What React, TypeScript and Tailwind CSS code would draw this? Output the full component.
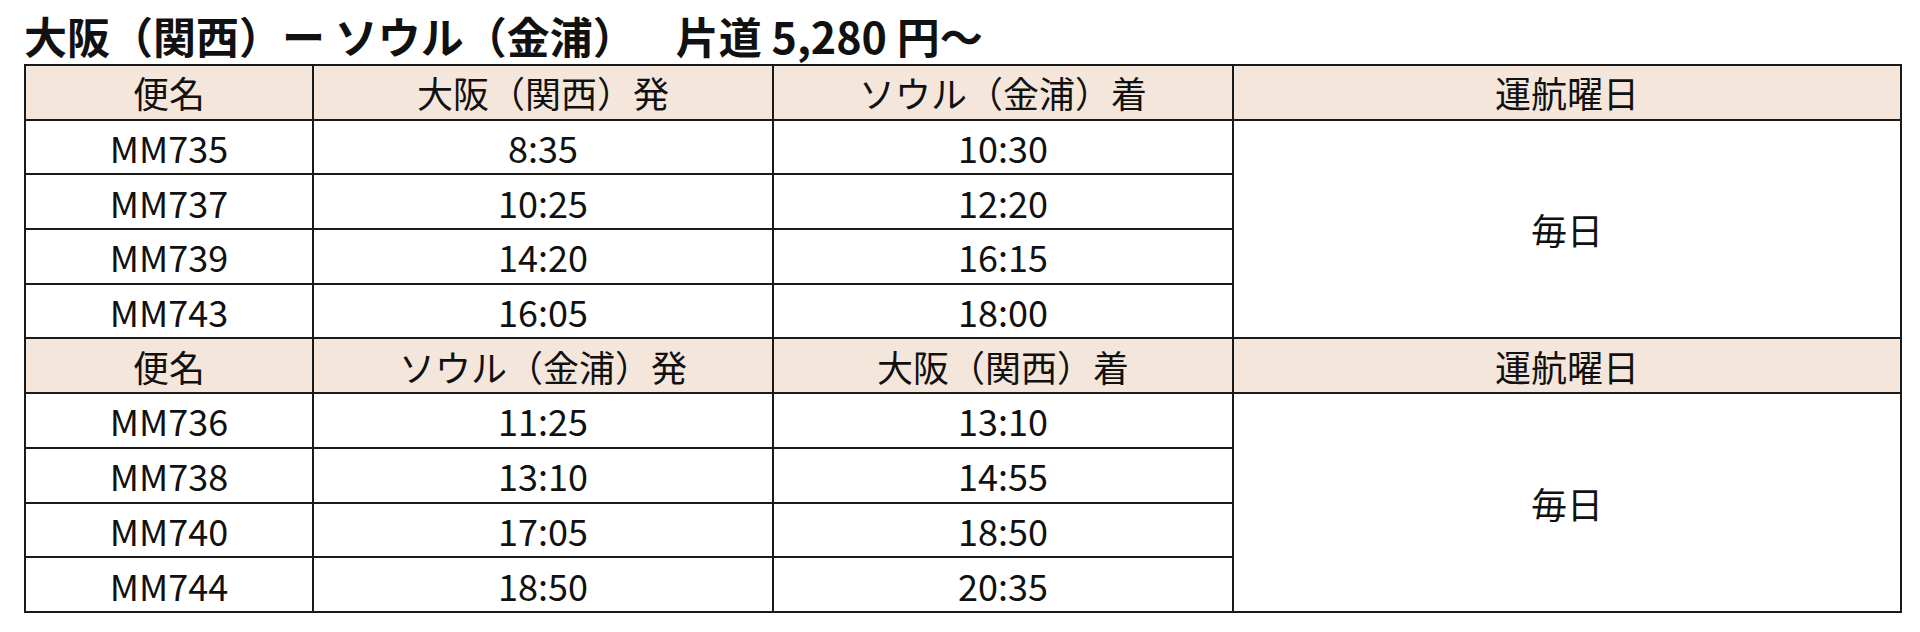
import React from 'react';

interface Flight {
  no: string;
  dep: string;
  arr: string;
}

const outbound: Flight[] = [
  { no: 'MM735', dep: '8:35', arr: '10:30' },
  { no: 'MM737', dep: '10:25', arr: '12:20' },
  { no: 'MM739', dep: '14:20', arr: '16:15' },
  { no: 'MM743', dep: '16:05', arr: '18:00' },
];

const inbound: Flight[] = [
  { no: 'MM736', dep: '11:25', arr: '13:10' },
  { no: 'MM738', dep: '13:10', arr: '14:55' },
  { no: 'MM740', dep: '17:05', arr: '18:50' },
  { no: 'MM744', dep: '18:50', arr: '20:35' },
];

const cell = 'border-2 border-[#1a1a1a] text-center align-middle p-0';
const head = `${cell} bg-[#f4e6db] font-normal`;

const Section: React.FC<{ from: string; to: string; rows: Flight[] }> = ({ from, to, rows }) => (
  <>
    <tr className="h-[54.7px]">
      <th className={head}>便名</th>
      <th className={head}>{from}</th>
      <th className={head}>{to}</th>
      <th className={head}>運航曜日</th>
    </tr>
    {rows.map((r, i) => (
      <tr key={r.no} className="h-[54.7px]">
        <td className={cell}>{r.no}</td>
        <td className={cell}>{r.dep}</td>
        <td className={cell}>{r.arr}</td>
        {i === 0 && (
          <td className={cell} rowSpan={rows.length}>
            毎日
          </td>
        )}
      </tr>
    ))}
  </>
);

export default function App() {
  return (
    <div
      className="w-[1920px] h-[632px] bg-white text-[#111] pl-[24px] pt-[6px]"
      style={{ fontFamily: '"Noto Sans CJK JP", "Noto Sans", sans-serif' }}
    >
      <h1 className="text-[43px] font-bold leading-[58px] whitespace-pre">
        大阪（関西）ー ソウル（金浦）<span className="ml-[40px]">片道 5,280 円〜</span>
      </h1>
      <table className="border-collapse table-fixed w-[1876px] text-[36px] leading-none">
        <colgroup>
          <col className="w-[288px]" />
          <col className="w-[460px]" />
          <col className="w-[460px]" />
          <col className="w-[668px]" />
        </colgroup>
        <tbody>
          <Section from="大阪（関西）発" to="ソウル（金浦）着" rows={outbound} />
          <Section from="ソウル（金浦）発" to="大阪（関西）着" rows={inbound} />
        </tbody>
      </table>
    </div>
  );
}
